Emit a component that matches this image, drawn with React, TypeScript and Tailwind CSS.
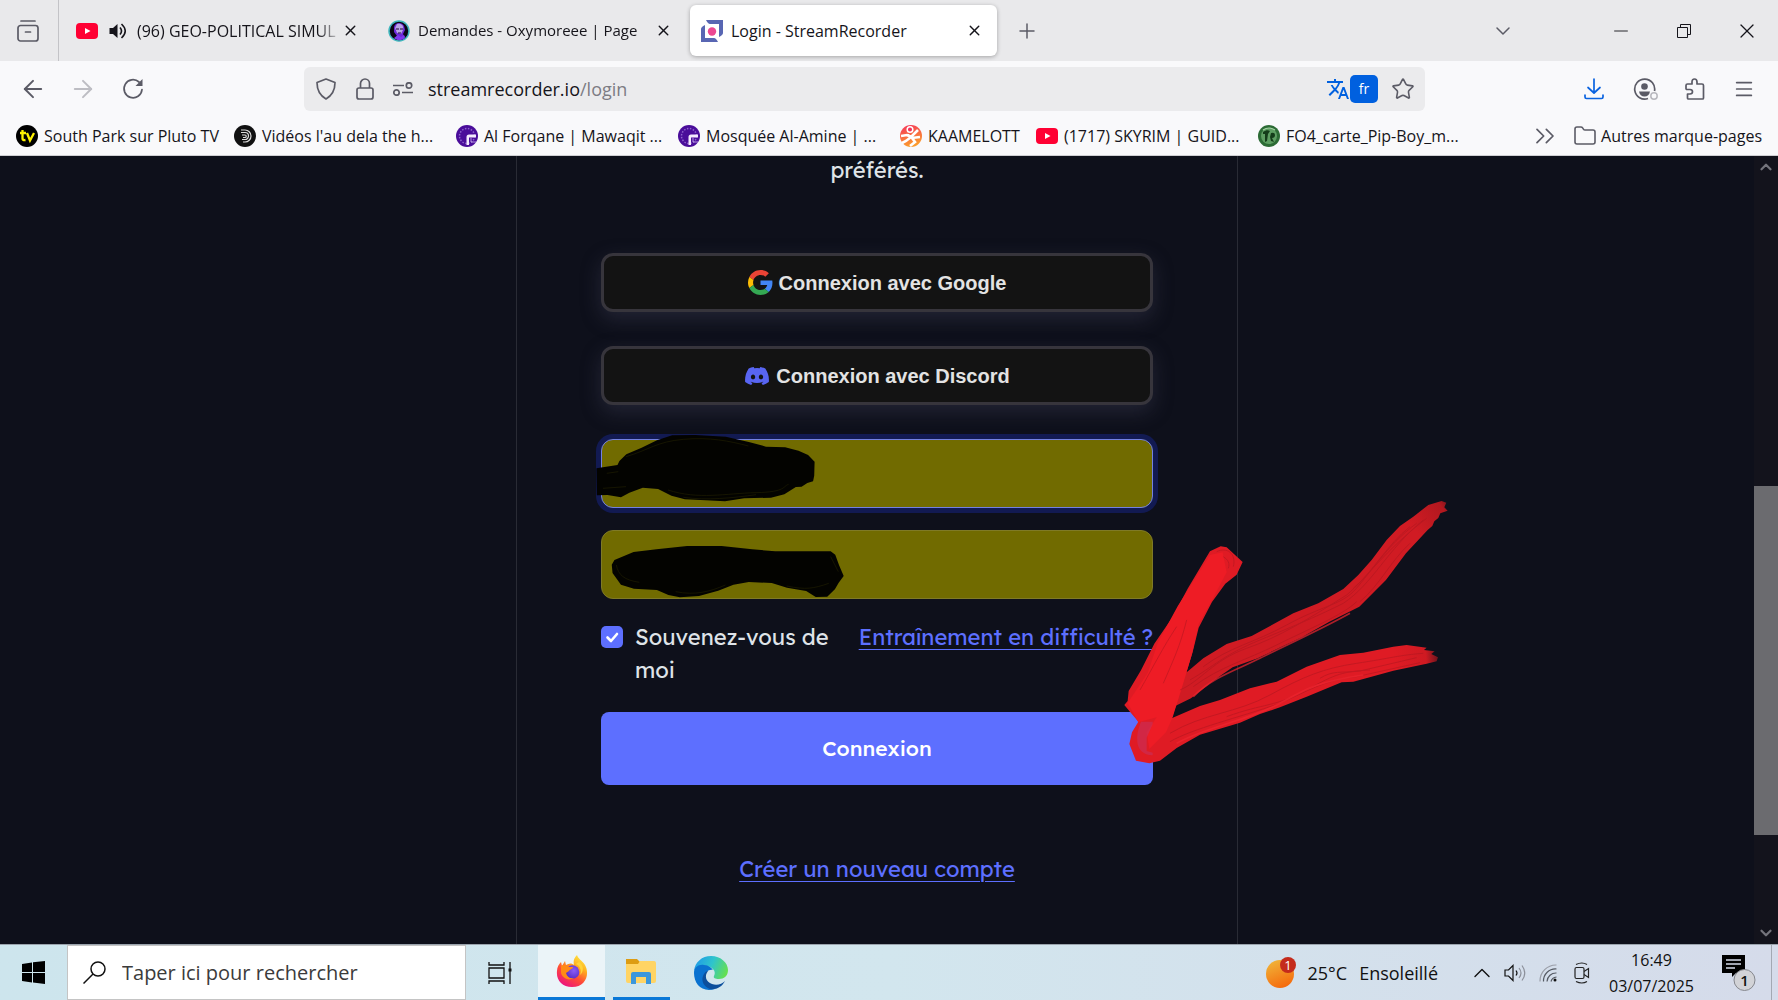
import type { ReactNode } from "react";
import {
  ArrowLeft,
  ArrowRight,
  ChevronDown,
  ChevronUp,
  ChevronsRight,
  Folder,
  Lock,
  Menu,
  Minus,
  Plus,
  Star,
  X,
} from "lucide-react";
import { FaDiscord } from "react-icons/fa";
import { MdTranslate } from "react-icons/md";

const UI_FONT = "font-['Open_Sans','Noto_Sans',sans-serif]";
const PAGE_FONT = "font-['Lexend','Inter',sans-serif]";

function YoutubeIcon() {
  return (
    <svg viewBox="0 0 22 22" className="size-[22px] shrink-0">
      <rect y="3" width="22" height="16" rx="4" fill="#ff0033" />
      <path d="M9 8v6l5.500-3z" fill="#fff" />
    </svg>
  );
}

function AvatarIcon() {
  return (
    <svg viewBox="0 0 22 22" className="size-[22px] shrink-0">
      <circle cx="11" cy="11" r="10" fill="#0b0716" stroke="#3fb6bd" strokeWidth="1.500" />
      <path d="M6 7c1-5 8-5 10-1l1 4-2 4 2 4c-3 3-8 2-10 0l2-2-3-4z" fill="#6d28d9" />
      <path d="M9 4c4-1 7 1 6 6l-2 4-4-1-2-5z" fill="#b9a5e6" />
      <path d="M8 9h3M12 9h3M10 13h3" stroke="#1b0b38" strokeWidth="1.200" />
      <path d="M6 18l4-3 3 2 3-2 1 2c-3 4-8 4-11 1z" fill="#7c3aed" />
    </svg>
  );
}

function StreamRecorderIcon() {
  return (
    <svg viewBox="0 0 22 22" className="size-[22px] shrink-0">
      <path d="M5 0h17v13q0 2-4 4V4H9q-2 0-4-4z" fill="#5866b3" />
      <path d="M0 9q0-2 4-4v13h9q2 0 4 4H0z" fill="#5866b3" />
      <circle cx="11" cy="11.500" r="4.200" fill="#ec4893" />
    </svg>
  );
}

function PlutoIcon() {
  return (
    <svg viewBox="0 0 22 22" className="size-[22px] shrink-0">
      <circle cx="11" cy="11" r="11" fill="#000" />
      <path d="M6.500 5v8.500q0 2 3 1.500M4 8h6M11 8l3 7.500L18 8" fill="none" stroke="#fff200" strokeWidth="2.300" />
    </svg>
  );
}

function DeezIcon() {
  return (
    <svg viewBox="0 0 22 22" className="size-[22px] shrink-0">
      <circle cx="11" cy="11" r="11" fill="#111" />
      <path
        d="M7 5h4a6 6 0 0 1 0 12H9M7 7.500h4a3.500 3.500 0 0 1 0 7H8M8 10h3a1 1 0 0 1 0 2.500H9"
        fill="none"
        stroke="#ddd"
        strokeWidth="1.200"
      />
    </svg>
  );
}

function MawaqitIcon() {
  return (
    <svg viewBox="0 0 22 22" className="size-[22px] shrink-0">
      <circle cx="11" cy="11" r="11" fill="#4a0d9a" />
      <circle cx="11" cy="11" r="7.500" fill="none" stroke="#8e63cc" strokeWidth="1.500" strokeDasharray="1.500 1.500" />
      <path d="M20 9.500h-7q-2.500 0-2.500 2.500v8h2.500v-7.500h7z" fill="#f3eafd" />
      <path d="M15 13v4h5" fill="none" stroke="#b497e0" />
    </svg>
  );
}

function KaamelottIcon() {
  return (
    <svg viewBox="0 0 22 22" className="size-[22px] shrink-0">
      <defs>
        <linearGradient id="kaam" x1="0" y1="0" x2="0.300" y2="1">
          <stop offset="0" stopColor="#f5325c" />
          <stop offset="1" stopColor="#fb9b2d" />
        </linearGradient>
      </defs>
      <circle cx="11" cy="11" r="11" fill="url(#kaam)" />
      <circle cx="10" cy="4.500" r="2.800" fill="#f5325c" stroke="#fff" strokeWidth="1.500" />
      <path
        d="M1 11l6-1 4 2 7-7M8 10l4 3 8-1M11 12l-5 4-4 2M12 13l3 4-5 4"
        fill="none"
        stroke="#fff"
        strokeWidth="2.600"
      />
    </svg>
  );
}

function PipBoyIcon() {
  return (
    <svg viewBox="0 0 22 22" className="size-[22px] shrink-0">
      <circle cx="11" cy="11" r="11" fill="#2c6b35" />
      <circle cx="11" cy="11" r="8" fill="#5d9e62" />
      <path d="M5 7c3-2 5-2 7-1l-2 3-1 7-2 1V9H5zM13 8q4-1 4 2t-3 3l2 4-3-1-1-4z" fill="#143d1a" />
      <path d="M5 5q6-4 12 0" fill="none" stroke="#a5d3a4" strokeWidth="1.200" />
    </svg>
  );
}

const bookmarks = [
  { label: "South Park sur Pluto TV", icon: <PlutoIcon />, width: "w-[218px]" },
  { label: "Vidéos l'au dela the h...", icon: <DeezIcon />, width: "w-[222px]" },
  { label: "Al Forqane | Mawaqit ...", icon: <MawaqitIcon />, width: "w-[222px]" },
  { label: "Mosquée Al-Amine | ...", icon: <MawaqitIcon />, width: "w-[222px]" },
  { label: "KAAMELOTT", icon: <KaamelottIcon />, width: "w-[136px]" },
  { label: "(1717) SKYRIM | GUID...", icon: <YoutubeIcon />, width: "w-[222px]" },
  { label: "FO4_carte_Pip-Boy_m...", icon: <PipBoyIcon />, width: "w-[222px]" },
];

function IconButton({ label, className = "w-[50px]", children }: { label: string; className?: string; children: ReactNode }) {
  return (
    <button type="button" aria-label={label} className={`flex h-full shrink-0 items-center justify-center ${className}`}>
      {children}
    </button>
  );
}

function TabBar() {
  return (
    <div className="flex h-[61px] items-center bg-[#e9e9eb] text-base text-[#15141a]">
      <IconButton label="Firefox View" className="w-[59px] border-r border-[#c3c3c7] pr-[2px]">
        <svg viewBox="0 0 22 22" className="size-[22px]" fill="none" stroke="#5b5b66" strokeWidth="1.700" strokeLinecap="round">
          <path d="M4 1h14" />
          <rect x="1" y="5.500" width="20" height="15.500" rx="2.500" />
          <path d="M8.500 12h5" />
        </svg>
      </IconButton>
      <div className="ml-[17px] flex h-[51px] w-[305px] shrink-0 items-center">
        <YoutubeIcon />
        <svg viewBox="0 0 18 18" className="ml-[11px] size-[18px] shrink-0" fill="none" stroke="#15141a" strokeWidth="1.600">
          <path d="M0.500 6H4l4.500-4v14L4 12H0.500z" fill="#15141a" stroke="none" />
          <path d="M11 5.500q3 3.500 0 7M12.500 2q7.500 7 0 14" />
        </svg>
        <span className="ml-[10px] flex-1 whitespace-nowrap mask-r-from-88%">(96) GEO-POLITICAL SIMUL</span>
        <button type="button" aria-label="Fermer l'onglet" className="mr-[22px]">
          <X size={17} strokeWidth={2} />
        </button>
      </div>
      <div className="ml-[7px] flex h-[51px] w-[302px] shrink-0 items-center">
        <AvatarIcon />
        <span className="ml-2 flex-1 text-[15px] whitespace-nowrap mask-r-from-92%">Demandes - Oxymoreee | Page</span>
        <button type="button" aria-label="Fermer l'onglet" className="mr-[18px]">
          <X size={17} strokeWidth={2} />
        </button>
      </div>
      <div className="flex h-[51px] w-[307px] shrink-0 items-center rounded-md bg-white px-[11px] shadow-[0_1px_4px_rgba(0,0,0,0.3)]">
        <StreamRecorderIcon />
        <span className="ml-2 flex-1">Login - StreamRecorder</span>
        <button type="button" aria-label="Fermer l'onglet" className="mr-[3px]">
          <X size={17} strokeWidth={2} />
        </button>
      </div>
      <IconButton label="Nouvel onglet" className="w-[60px]">
        <Plus size={24} strokeWidth={1.5} color="#5b5b66" />
      </IconButton>
      <div className="flex-1" />
      <IconButton label="Lister tous les onglets" className="mr-14 w-[60px]">
        <ChevronDown size={24} strokeWidth={1.5} color="#5b5b66" />
      </IconButton>
      <IconButton label="Réduire" className="w-[63px]">
        <Minus size={22} strokeWidth={1} />
      </IconButton>
      <IconButton label="Restaurer" className="w-[63px]">
        <svg viewBox="0 0 14 14" className="size-[14px]" fill="none" stroke="#15141a">
          <path d="M0.500 3.500h10v10h-10zM3.500 3V0.500h10v10H11" />
        </svg>
      </IconButton>
      <IconButton label="Fermer" className="w-[63px]">
        <X size={24} strokeWidth={1.2} />
      </IconButton>
    </div>
  );
}

function NavBar() {
  return (
    <div className="flex h-[56px] items-center pl-2 text-[#5b5b66]">
      <IconButton label="Précédent">
        <ArrowLeft size={28} strokeWidth={1.7} />
      </IconButton>
      <IconButton label="Suivant">
        <ArrowRight size={28} strokeWidth={1.7} color="#bdbdc3" />
      </IconButton>
      <IconButton label="Actualiser">
        <svg viewBox="0 0 22 22" className="size-[22px]" fill="none" stroke="currentColor" strokeWidth="1.700" strokeLinecap="round">
          <path d="M17 4a9 9 0 1 0 3 7.500" />
          <path d="M20.500 1v7h-7z" fill="currentColor" stroke="none" />
        </svg>
      </IconButton>
      <div className="ml-[146px] flex h-11 min-w-0 flex-1 items-center rounded-md bg-[#ebebed]">
        <IconButton label="Protection" className="w-[43px]">
          <svg viewBox="0 0 22 22" className="size-[22px]" fill="none" stroke="currentColor" strokeWidth="1.700" strokeLinejoin="round">
            <path d="M11 1l9 3.500c0 8-3 13-9 16.500C5 17.500 2 12.500 2 4.500z" />
          </svg>
        </IconButton>
        <IconButton label="Sécurité du site" className="w-[36px]">
          <svg viewBox="0 0 18 22" className="h-[22px] w-[18px]" fill="none" stroke="currentColor" strokeWidth="1.700">
            <rect x="1" y="10" width="16" height="11" rx="2" />
            <path d="M4.500 10V5.500a4.500 4.500 0 0 1 9 0V10" />
          </svg>
        </IconButton>
        <IconButton label="Autorisations" className="w-[40px]">
          <svg viewBox="0 0 20 14" className="h-[14px] w-5" fill="none" stroke="currentColor" strokeWidth="1.700">
            <path d="M0 3.500h11M9 10.500h11" />
            <circle cx="16" cy="3.500" r="2.700" />
            <circle cx="3.500" cy="10.500" r="2.700" />
          </svg>
        </IconButton>
        <a href="#login" className="ml-[5px] flex-1 text-lg text-[#15141a]">
          streamrecorder.io<span className="text-[#7c7c84]">/login</span>
        </a>
        <MdTranslate size={24} color="#0060df" />
        <button type="button" className="flex h-7 w-7 items-center justify-center rounded-[5px] bg-[#0060df] text-sm text-white">
          fr
        </button>
        <IconButton label="Marquer cette page" className="w-[47px] pl-[2px]">
          <Star size={24} strokeWidth={1.6} />
        </IconButton>
      </div>
      <IconButton label="Téléchargements" className="ml-[144px] w-[50px]">
        <svg viewBox="0 0 20 22" className="h-[22px] w-5" fill="none" stroke="#0a63e0" strokeWidth="1.700" strokeLinecap="round" strokeLinejoin="round">
          <path d="M10 1v14M4 9.500l6 5.500 6-5.500M1 17v2q0 1.500 1.500 1.500h15q1.500 0 1.500-1.500v-2" />
        </svg>
      </IconButton>
      <IconButton label="Compte" className="w-[50px] pl-1">
        <svg viewBox="0 0 26 22" className="h-[22px] w-[26px]" fill="none" stroke="currentColor" strokeWidth="1.700">
          <path d="M21.500 13A10 10 0 1 0 15 20.500" />
          <circle cx="11.500" cy="8.500" r="3.300" fill="currentColor" stroke="none" />
          <path d="M6 13.500h11q-1 5-5.500 5T6 13.500z" fill="currentColor" stroke="none" />
          <circle cx="21" cy="18" r="3.200" stroke="#b8b8be" strokeWidth="1.500" />
        </svg>
      </IconButton>
      <IconButton label="Extensions" className="w-[50px] pl-[2px]">
        <svg viewBox="0 0 20 22" className="h-[22px] w-5" fill="none" stroke="currentColor" strokeWidth="1.700" strokeLinejoin="round">
          <path d="M2.500 6H7V4q0-3 2.500-3T12 4v2h5q1.500 0 1.500 1.500V20q0 1-1 1h-14q-1 0-1-1v-4H5q2.500 0 2.500-2.200T5 11.500H2q-1 0-1-1V7.500Q1 6 2.500 6z" />
        </svg>
      </IconButton>
      <IconButton label="Menu" className="mr-[9px] w-[50px]">
        <Menu size={22} strokeWidth={1.9} />
      </IconButton>
    </div>
  );
}

function BookmarksBar() {
  return (
    <nav className="flex h-[39px] items-center border-b border-[#cfcfd3] pr-4 pl-4 text-base text-[#15141a]">
      {bookmarks.map((bookmark) => (
        <a key={bookmark.label} href="#bookmark" className={`flex shrink-0 items-center gap-[6px] whitespace-nowrap ${bookmark.width}`}>
          {bookmark.icon}
          {bookmark.label}
        </a>
      ))}
      <div className="flex-1" />
      <button type="button" aria-label="Afficher plus de marque-pages" className="mr-3">
        <ChevronsRight size={32} strokeWidth={1.3} color="#5b5b66" />
      </button>
      <button type="button" className="flex shrink-0 items-center gap-1 whitespace-nowrap">
        <Folder size={24} strokeWidth={1.6} color="#5b5b66" />
        Autres marque-pages
      </button>
    </nav>
  );
}

function GoogleLogo() {
  return (
    <svg viewBox="0 0 48 48" className="size-[25px]">
      <path fill="#EA4335" d="M24 9.500c3.540 0 6.710 1.220 9.210 3.600l6.850-6.850C35.900 2.380 30.470 0 24 0 14.620 0 6.510 5.380 2.560 13.220l7.980 6.190C12.430 13.720 17.740 9.500 24 9.500z" />
      <path fill="#4285F4" d="M46.980 24.550c0-1.570-.15-3.090-.38-4.550H24v9.020h12.940c-.58 2.960-2.260 5.480-4.780 7.180l7.730 6c4.510-4.180 7.090-10.360 7.090-17.650z" />
      <path fill="#FBBC05" d="M10.530 28.590c-.48-1.450-.76-2.990-.76-4.590s.27-3.140.76-4.590l-7.980-6.190C.92 16.460 0 20.120 0 24c0 3.880.92 7.540 2.560 10.780l7.970-6.190z" />
      <path fill="#34A853" d="M24 48c6.480 0 11.930-2.130 15.890-5.810l-7.730-6c-2.150 1.450-4.920 2.300-8.160 2.300-6.260 0-11.570-4.220-13.470-9.910l-7.980 6.190C6.510 42.620 14.620 48 24 48z" />
    </svg>
  );
}

function ProviderButton({ icon, children }: { icon: ReactNode; children: ReactNode }) {
  return (
    <button
      type="button"
      className="flex h-[59px] w-full items-center justify-center gap-[6px] rounded-xl border-[3px] border-[#37353c] bg-[#131313] font-['Liberation_Sans',Arial,sans-serif] text-xl font-bold text-[#e3e3e3] shadow-[0_7px_20px_rgba(75,75,100,0.35)]"
    >
      {icon}
      {children}
    </button>
  );
}

// Brush marks painted over the form
function BrushMarks() {
  return (
    <svg viewBox="580 410 900 390" className="pointer-events-none absolute top-[254px] left-[63px] h-[390px] w-[900px]" aria-hidden>
      <defs>
        <linearGradient id="arm-upper" gradientUnits="userSpaceOnUse" x1="1060" y1="200" x2="1165" y2="125">
          <stop offset="0" stopColor="#d01b23" />
          <stop offset="0.800" stopColor="#b3181f" />
          <stop offset="1" stopColor="#7a141c" />
        </linearGradient>
        <linearGradient id="arm-lower" gradientUnits="userSpaceOnUse" x1="1000" y1="600" x2="1140" y2="590">
          <stop offset="0" stopColor="#df1b24" />
          <stop offset="0.700" stopColor="#cf1a22" />
          <stop offset="1" stopColor="#5e131c" />
        </linearGradient>
      </defs>
      <g transform="translate(580 410) scale(0.3827 0.3333)">
        <path
          fill="#030300"
          d="M43 175l55-10 5-12 18-20 40-20 40-22 40-15 60-1 80 5 60 16 45 14 50 2 35 10 25 13 17 20-1 42-3 17-15 5-15 11-15 1-30 22-35 10-70 2-50 9-50-3-55-3-35-11-35-20-40-4-35 15-22 14-35-7-28 1z"
        />
        <path
          fill="#030300"
          d="M90 450l50-24 60-8 80-10h90l80 10 60 6h145l12 10 10 32 12 32-13 20-10 20-20 22-30 1-25-18-50-10-40-14-60-3-40 8-40 18-50 16-50 4-30-7-30-15-60-4-34-12-22-35-2-25z"
        />
        <g fill="none" stroke="#1e1c00" strokeWidth="2">
          <path d="M120 140c60-20 80-45 150-52s120 5 170 20M230 240c80 30 150 10 230 8s70-20 85-25M270 262c60 10 130 2 190-8M70 190l30-5M60 235l60-5" />
          <path d="M95 465c5 30 20 45 60 52M250 545c50 12 90 0 130-20M540 528c50 12 70 8 110-8M655 440l20 45" />
        </g>
      </g>
      <g transform="translate(1060 460) scale(0.3333)">
        <path
          fill="url(#arm-upper)"
          d="M382 635l48-40 70-43 75-24 125-68 75-30 75-43 45-42 40-45 45-60 40-42 40-28 45-35 40-12 14 5-6 14 10 10-22 8-6 14-12 10-6 14-14 12-65 70-60 80-80 80-90 45-80 45-135 65-75 27-55 38-70 55-55 27-100 40-30-30 60-70z"
        />
        <path
          fill="url(#arm-lower)"
          d="M335 775l85-37 60-18 90-35 80-20 90-45 100-35 70-7 90-18 40-5 60 8-8 7 32 4-10 8 20 10-4 12-30 7-100 21-120 33-35 2-105 43-80 32-60 20-60 26-120 36-70 40-50 38-32 8-40-8-20-50 8-35 19-32-42-50 10-12 3-30 37-62 40-80 55-80 45-85 67-112 32-15 18 3 48 44-18 38-34 27-40 55-40 77-18 73-20 65-30 95z"
        />
        <path
          fill="#ee1c25"
          d="M450 285l38-8 12 60-42 80-42 75-20 90-30 100-28 90-20 45-50 50-8-50 30-45-55 15-32-58 60-90 30-90 60-110z"
        />
        <path fill="#c8305c" opacity="0.6" d="M243 785h35v8l-18 40v40l18 5v8c-30 0-44-20-46-40s2-40 11-61z" />
        <g fill="none" stroke="#a9161f" strokeWidth="3" opacity="0.5">
          <path d="M360 690c60-25 100-90 200-125s180-85 300-160c60-50 110-130 240-230" />
          <path d="M390 660c70-40 100-75 210-120s180-75 250-110c90-60 130-160 240-250" />
          <path d="M400 680c80-60 160-80 250-125s200-90 240-130" />
          <path d="M430 620c80-60 150-70 250-125s160-60 200-100 100-140 190-205" />
          <path d="M900 425c60-50 90-120 150-175M880 385c60-50 100-130 170-185" />
          <path d="M330 820c100-60 200-60 300-115s160-80 260-95 130-25 200-30" />
          <path d="M330 845c70-40 200-70 330-115 80-35 130-70 230-80l190-42" />
          <path d="M500 770c110-40 150-30 240-80s110-55 190-60" />
          <path d="M780 655c40-25 60-15 120-22l170-40" />
          <path d="M240 690c40-70 70-130 110-190M310 670c30-70 50-110 70-190M470 275c30-15 60 5 50 45M490 290c15 10 20 20 15 35" />
        </g>
        <g fill="none" stroke="#f02630" strokeWidth="5" opacity="0.7">
          <path d="M400 710c60-60 130-80 200-115s180-85 270-135" />
          <path d="M350 850c90-50 220-70 310-120s120-65 250-85" />
        </g>
      </g>
    </svg>
  );
}

function LoginForm() {
  return (
    <form
      onSubmit={(event) => event.preventDefault()}
      className={`relative mx-auto w-full max-w-[722px] border-x border-[#292b35] px-[84px] text-[22px] leading-[33px] text-[#dfe3e8] ${PAGE_FONT}`}
    >
      <p className="text-center leading-7">préférés.</p>
      <div className="mt-[69px] flex flex-col gap-[34px]">
        <ProviderButton icon={<GoogleLogo />}>Connexion avec Google</ProviderButton>
        <ProviderButton icon={<FaDiscord size={26} color="#5865f2" />}>Connexion avec Discord</ProviderButton>
      </div>
      <input
        type="email"
        aria-label="E-mail"
        className="mt-[34px] block h-[69px] w-full rounded-xl border border-[#7381e0] bg-[#716b00] px-5 shadow-[0_0_0_5px_#121a52] outline-none"
      />
      <input
        type="password"
        aria-label="Mot de passe"
        className="mt-[22px] block h-[69px] w-full rounded-xl border border-[#7f7a26] bg-[#716b00] px-5 outline-none"
      />
      <div className="mt-[22px] flex justify-between">
        <div className="flex w-[240px] gap-3">
          <span className="relative mt-[5px] size-[22px] shrink-0">
            <input id="remember" type="checkbox" defaultChecked className="block size-[22px] appearance-none rounded-[5px] bg-[#5d6fff]" />
            <svg viewBox="0 0 22 22" className="pointer-events-none absolute inset-0" fill="none" stroke="#fff" strokeWidth="2.600" strokeLinecap="round" strokeLinejoin="round">
              <path d="M6.500 11.500l3.500 3.500 6-7" />
            </svg>
          </span>
          <label htmlFor="remember">Souvenez-vous de moi</label>
        </div>
        <a href="#help" className="whitespace-nowrap text-[#5d6fff] underline decoration-1 underline-offset-4">
          Entraînement en difficulté ?
        </a>
      </div>
      <button type="submit" className="mt-[25px] block h-[73px] w-full rounded-lg bg-[#5d6fff] text-[21px] font-medium text-white">
        Connexion
      </button>
      <p className="mt-[68px] text-center">
        <a href="#register" className="text-[#5d6fff] underline decoration-1 underline-offset-4">
          Créer un nouveau compte
        </a>
      </p>
      <BrushMarks />
    </form>
  );
}

function FirefoxLogo() {
  return (
    <svg viewBox="0 0 32 32" className="size-8">
      <defs>
        <linearGradient id="fx-body" x1="0.900" y1="0" x2="0.300" y2="1">
          <stop offset="0" stopColor="#fff44f" />
          <stop offset="0.350" stopColor="#ffb01f" />
          <stop offset="0.650" stopColor="#ff4b36" />
          <stop offset="1" stopColor="#ec1280" />
        </linearGradient>
        <radialGradient id="fx-globe" cx="0.600" cy="0.400" r="0.600">
          <stop offset="0" stopColor="#8b5cf6" />
          <stop offset="1" stopColor="#5a2fc9" />
        </radialGradient>
      </defs>
      <path d="M21 0c1 4 5 5 8 10 5 9 1 22-13 22C6 32 0 25 1 16c0-4 2-7 4-9l1 4 3-5 1 4c3-2 6-2 8 0-1-4 0-7 3-10z" fill="url(#fx-body)" />
      <circle cx="16.500" cy="17" r="6.800" fill="url(#fx-globe)" />
      <path d="M5 11c3-2 6-1 8 1h4c0 2-3 2-4 4l-3 2c1 4 4 6 8 5-6 4-13-1-13-6z" fill="#ff8a16" />
      <path d="M20 9c4 2 6 6 4 11 4-3 4-10-1-13z" fill="#ffd43a" />
    </svg>
  );
}

function ExplorerLogo() {
  return (
    <svg viewBox="0 0 30 25" className="h-[25px] w-[30px]">
      <path d="M0 0h11l3 3v4H0z" fill="#dd9c12" />
      <path d="M0 5h12l2-3h14q2 0 2 2v18q0 2-2 2H2q-2 0-2-2z" fill="#ffd464" />
      <path d="M5 25V15q0-2 2-2h16q2 0 2 2v10h-5v-7H10v7H5z" fill="#3b97dc" />
    </svg>
  );
}

function EdgeLogo() {
  return (
    <svg viewBox="0 0 34 34" className="size-[34px]">
      <defs>
        <linearGradient id="edge-top" x1="0" y1="0.300" x2="1" y2="0.600">
          <stop offset="0" stopColor="#1f9be8" />
          <stop offset="0.500" stopColor="#2fc4cc" />
          <stop offset="1" stopColor="#66e04f" />
        </linearGradient>
      </defs>
      <path d="M0 15C1 6 8 0 17 0c10 0 17 7 17 14 0 6-4 9-9 9-4 0-6-1-5-3 2-4 0-7-4-9-6-3-13-1-16 4z" fill="url(#edge-top)" />
      <path d="M0 17c0-6 5-9 10-8 4 0 7 2 9 5-5-1-9 3-8 9 1 5 5 9 10 10C8 37 0 28 0 17z" fill="#0a72d0" />
      <path d="M14 15c-4 5-2 11 4 13 5 2 10 0 13-3-3 6-9 9-15 8-6-2-9-8-7-13 1-3 3-5 5-5z" fill="#0c4f9c" />
    </svg>
  );
}

function Taskbar() {
  return (
    <footer className="flex h-14 items-stretch border-t border-[#9aa3ad] bg-linear-to-r from-[#cde5ed] via-[#d2e6ee] to-[#d5dbea] text-[#111]">
      <IconButton label="Démarrer" className="w-[67px]">
        <svg viewBox="0 0 23 23" className="size-[23px]">
          <path d="M0 3l10-1.500V11H0zM11 1.300L23 0v11H11zM0 12h10v9.500L0 20zM11 12h12v11l-12-1.500z" fill="#000" />
        </svg>
      </IconButton>
      <label className="flex w-[399px] shrink-0 items-center border border-[#c4c4c4] bg-white pl-[15px]">
        <svg viewBox="0 0 23 23" className="size-[23px]" fill="none" stroke="#111" strokeWidth="1.500">
          <circle cx="15" cy="8" r="7" />
          <path d="M10 13l-9.500 9.500" />
        </svg>
        <input
          type="text"
          aria-label="Rechercher"
          placeholder="Taper ici pour rechercher"
          className="ml-4 min-w-0 flex-1 text-xl outline-none placeholder:text-[#3b3b3b]"
        />
      </label>
      <IconButton label="Affichage des tâches" className="w-[72px] pr-1">
        <svg viewBox="0 0 24 22" className="h-[22px] w-6" fill="none" stroke="#111" strokeWidth="1.300">
          <path d="M1 0v3h15V0M1 22v-3h15v3M1 6h15v10H1zM22 0v22" />
          <path d="M20.500 6.500h3v3h-3z" fill="#111" stroke="none" />
        </svg>
      </IconButton>
      <IconButton label="Firefox" className="w-[67px] border-b-[3px] border-[#0a78d7] bg-[#ebf4f8]">
        <FirefoxLogo />
      </IconButton>
      <IconButton label="Explorateur de fichiers" className="ml-[8px] w-[57px] border-b-[3px] border-[#0a78d7] pr-[2px]">
        <ExplorerLogo />
      </IconButton>
      <IconButton label="Microsoft Edge" className="ml-[9px] w-[64px]">
        <EdgeLogo />
      </IconButton>
      <div className="flex-1" />
      <button type="button" className="flex shrink-0 items-center text-lg whitespace-nowrap">
        <svg viewBox="0 0 30 32" className="h-8 w-[30px]">
          <defs>
            <linearGradient id="sun" x1="0.200" y1="0" x2="0.600" y2="1">
              <stop offset="0" stopColor="#f0b53a" />
              <stop offset="1" stopColor="#f56a0c" />
            </linearGradient>
          </defs>
          <circle cx="14" cy="17" r="14" fill="url(#sun)" />
          <circle cx="22" cy="8" r="8" fill="#c42b1c" />
          <text x="22" y="13" textAnchor="middle" fontSize="13" fill="#fff">
            1
          </text>
        </svg>
        <span className="ml-3">25°C</span>
        <span className="ml-3">Ensoleillé</span>
      </button>
      <IconButton label="Icônes cachées" className="ml-[27px] w-[34px]">
        <ChevronUp size={28} strokeWidth={1.2} />
      </IconButton>
      <IconButton label="Volume" className="w-[32px]">
        <svg viewBox="0 0 22 18" className="h-[18px] w-[22px]" fill="none" stroke="#111" strokeWidth="1.200">
          <path d="M1 6h3.500L9 1.500v15L4.500 12H1z" />
          <path d="M12 6.500q2 2.500 0 5" />
          <path d="M15 4q4 5 0 10M18 1.500q5.500 7.500 0 15" stroke="#8b8f99" />
        </svg>
      </IconButton>
      <IconButton label="Réseau" className="w-[34px]">
        <svg viewBox="0 0 18 18" className="size-[18px]" fill="none" stroke="#555a63" strokeWidth="1.200">
          <path d="M1 17.500A16 16 0 0 1 17.500 1" stroke="#9a9ea8" />
          <path d="M4.500 17.500A12 12 0 0 1 17.500 5M8 17.500A9 9 0 0 1 17.500 9M12 17.500q1-4 5.500-4.500" />
          <circle cx="16" cy="16" r="1.500" fill="#111" stroke="none" />
        </svg>
      </IconButton>
      <IconButton label="Réunion" className="w-[34px]">
        <svg viewBox="0 0 16 22" className="h-[22px] w-4" fill="none" stroke="#222" strokeWidth="1.200">
          <path d="M2 2.500q6-3 11 0M2 19.500q6 3 11 0" />
          <rect x="1" y="5.500" width="9" height="11" rx="1.500" />
          <path d="M10 9.500l4.500-3v9l-4.500-3" />
        </svg>
      </IconButton>
      <div className="flex w-[105px] shrink-0 flex-col items-center justify-center text-base leading-[26px]">
        <span>16:49</span>
        <span>03/07/2025</span>
      </div>
      <IconButton label="Notifications" className="ml-[18px] w-[34px]">
        <svg viewBox="0 0 34 36" className="h-9 w-[34px]">
          <path d="M0 0h23v18H14l-4 4v-4H0z" fill="#000" />
          <path d="M4 5h15M4 9h15M4 13h9" stroke="#d5dbea" strokeWidth="1.300" />
          <circle cx="22.500" cy="25" r="10.500" fill="#d2d3d7" stroke="#85878d" />
          <text x="22.500" y="30.500" textAnchor="middle" fontSize="15" fontWeight="600" fill="#111">
            1
          </text>
        </svg>
      </IconButton>
      <div className="ml-[15px] w-[7px] border-l border-[#a3a8b3]" />
    </footer>
  );
}

export default function App() {
  return (
    <div className={`flex min-h-screen flex-col bg-[#f9f9fb] ${UI_FONT}`}>
      <header>
        <TabBar />
        <NavBar />
        <BookmarksBar />
      </header>
      <main className="flex flex-1 overflow-hidden bg-[#0e101b]">
        <div className="flex flex-1">
          <LoginForm />
        </div>
        <div className="flex w-6 flex-col items-center bg-[#13131c] text-[#74747c]">
          <ChevronUp size={18} strokeWidth={3} className="my-[2px]" />
          <div className="flex-[307]" />
          <div className="w-full flex-[347] bg-[#6b6b6f]" />
          <div className="flex-[87]" />
          <ChevronDown size={18} strokeWidth={3} className="my-[2px]" />
        </div>
      </main>
      <Taskbar />
    </div>
  );
}
